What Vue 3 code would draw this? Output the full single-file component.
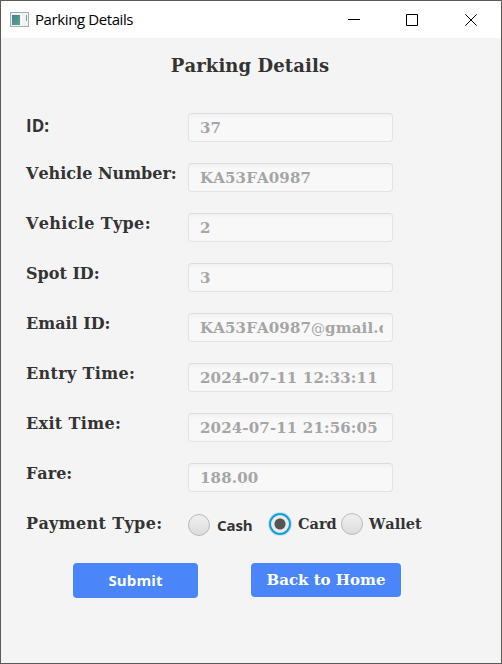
<script setup>
import { ref } from 'vue'

const fields = [
  { label: 'ID:', value: '37', sans: true },
  { label: 'Vehicle Number:', value: 'KA53FA0987' },
  { label: 'Vehicle Type:', value: '2', wide: true },
  { label: 'Spot ID:', value: '3' },
  { label: 'Email ID:', value: 'KA53FA0987', domain: 'gmail.com' },
  { label: 'Entry Time:', value: '2024-07-11 12:33:11', wide: true },
  { label: 'Exit Time:', value: '2024-07-11 21:56:05', wide: true },
  { label: 'Fare:', value: '188.00' },
]
const methods = ['Cash', 'Card', 'Wallet']
const selected = ref('Card')
</script>

<template>
  <div class="window">
    <header class="titlebar">
      <svg class="app-icon" width="19" height="15" viewBox="0 0 19 15">
        <defs>
          <linearGradient id="pane" x1="0" y1="0" x2="1" y2="1">
            <stop offset="0" stop-color="#4878a0" />
            <stop offset="1" stop-color="#58ad78" />
          </linearGradient>
        </defs>
        <rect x=".5" y=".5" width="18" height="14" fill="#f2f3f4" stroke="#a9adb3" />
        <rect x="2" y="3" width="8" height="10" fill="url(#pane)" />
        <path d="M11.5 2v11" stroke="#fff" />
        <path d="M16.5 3v6" stroke="#66aa8c" />
      </svg>
      <span class="caption">Parking Details</span>
      <div class="controls">
        <svg width="12" height="12" viewBox="0 0 12 12"><path d="M0 5.5h12" /></svg>
        <svg width="12" height="12" viewBox="0 0 12 12"><path d="M.5 .5h11v11H.5z" /></svg>
        <svg class="close" width="12" height="12" viewBox="0 0 12 12"><path d="M.3 .3l11.4 11.4M11.7 .3L.3 11.7" /></svg>
      </div>
    </header>

    <main class="content">
      <h1 class="heading">Parking Details</h1>
      <div class="form">
        <div v-for="f in fields" :key="f.label" class="row">
          <span class="label" :class="{ sans: f.sans, wide: f.wide }">{{ f.label }}</span>
          <div class="field">
            <span class="value">{{ f.value }}<template v-if="f.domain"><span class="at">@</span>{{ f.domain }}</template></span>
          </div>
        </div>
        <div class="row">
          <span class="label wide">Payment Type:</span>
          <div class="radios">
            <div
              v-for="m in methods"
              :key="m"
              class="option"
              :class="[m.toLowerCase(), { on: selected === m }]"
              @click="selected = m"
            >
              <span class="dot"></span>
              <span class="name">{{ m }}</span>
            </div>
          </div>
        </div>
      </div>
      <div class="actions">
        <button class="btn submit">Submit</button>
        <button class="btn home">Back to Home</button>
      </div>
    </main>
  </div>
</template>

<style>
body { margin: 0; }
</style>

<style scoped>
.window {
  box-sizing: border-box;
  width: 502px;
  height: 664px;
  border: 1px solid #5c5959;
  background: #f4f4f4;
  color: #333;
  font-family: 'DejaVu Serif', serif;
  font-weight: 700;
  font-kerning: none;
  display: flex;
  flex-direction: column;
}
.titlebar {
  height: 37px;
  flex: none;
  background: #fff;
  display: flex;
  align-items: center;
  padding-left: 9px;
}
.caption {
  margin: -2px 0 0 6px;
  color: #000;
  font: 400 15px/20px 'Open Sans', sans-serif;
  letter-spacing: -.4px;
}
.controls {
  margin-left: auto;
  display: flex;
  gap: 46px;
  padding-right: 24px;
}
.controls svg {
  display: block;
  fill: none;
  stroke: #000;
}
.controls .close { margin-left: 1px; }
.content { flex: 1; }
.heading {
  margin: 16px 0 0;
  padding-right: 2px;
  text-align: center;
  font-size: 18px;
  line-height: 24px;
  letter-spacing: .1px;
}
.form {
  margin-top: 35px;
  padding-left: 25px;
}
.row {
  display: flex;
  height: 50px;
  align-items: flex-start;
}
.label {
  width: 162px;
  flex: none;
  font-size: 16px;
  line-height: 22px;
  white-space: nowrap;
}
.label.wide { letter-spacing: .35px; }
.label.sans {
  font-family: 'Open Sans', sans-serif;
  font-size: 17px;
  padding-top: 2px;
}
.field {
  box-sizing: border-box;
  width: 205px;
  height: 29px;
  padding: 0 9px 0 11px;
  border: 1px solid #e3e3e3;
  border-top-color: #dcdcdc;
  border-radius: 4px;
  background: linear-gradient(#f1f1f1, #f8f8f8 5px);
  color: #a5a5a5;
  font-size: 15px;
  line-height: 28px;
}
.value {
  display: block;
  height: 27px;
  overflow: hidden;
  white-space: nowrap;
  letter-spacing: .15px;
}
.at {
  font-weight: 400;
  font-size: 14px;
  letter-spacing: 0;
}
.radios { display: flex; }
.option {
  display: flex;
  height: 22px;
  align-items: center;
}
.cash { width: 81px; margin-top: 1px; }
.card { width: 72px; }
.dot {
  box-sizing: border-box;
  width: 22px;
  height: 22px;
  flex: none;
  border: 1px solid #b9b9b9;
  border-radius: 50%;
  background: linear-gradient(#f0f0f0, #dcdcdc);
}
.name {
  margin-left: 6px;
  font-size: 14.5px;
  line-height: 24px;
}
.card .name { margin-left: 7px; }
.cash .name {
  margin-left: 7px;
  font-family: 'Open Sans', sans-serif;
  font-size: 15px;
  letter-spacing: -.1px;
}
.on .dot {
  border: 2px solid #149fcf;
  box-shadow: 0 0 2px #58c4e8;
  background: radial-gradient(circle, #555 5px, #eaeaea 6px);
}
.actions {
  display: flex;
  align-items: flex-start;
  gap: 53px;
  padding-left: 72px;
}
.btn {
  border: 0;
  padding: 0;
  border-radius: 4px;
  background: #4a86fa;
  color: #fff;
  font: inherit;
  font-size: 15px;
  line-height: 34px;
}
.submit {
  width: 125px;
  height: 35px;
  padding-bottom: 2px;
  font-family: 'Open Sans', sans-serif;
  letter-spacing: .1px;
}
.home { width: 150px; height: 34px; }
</style>
